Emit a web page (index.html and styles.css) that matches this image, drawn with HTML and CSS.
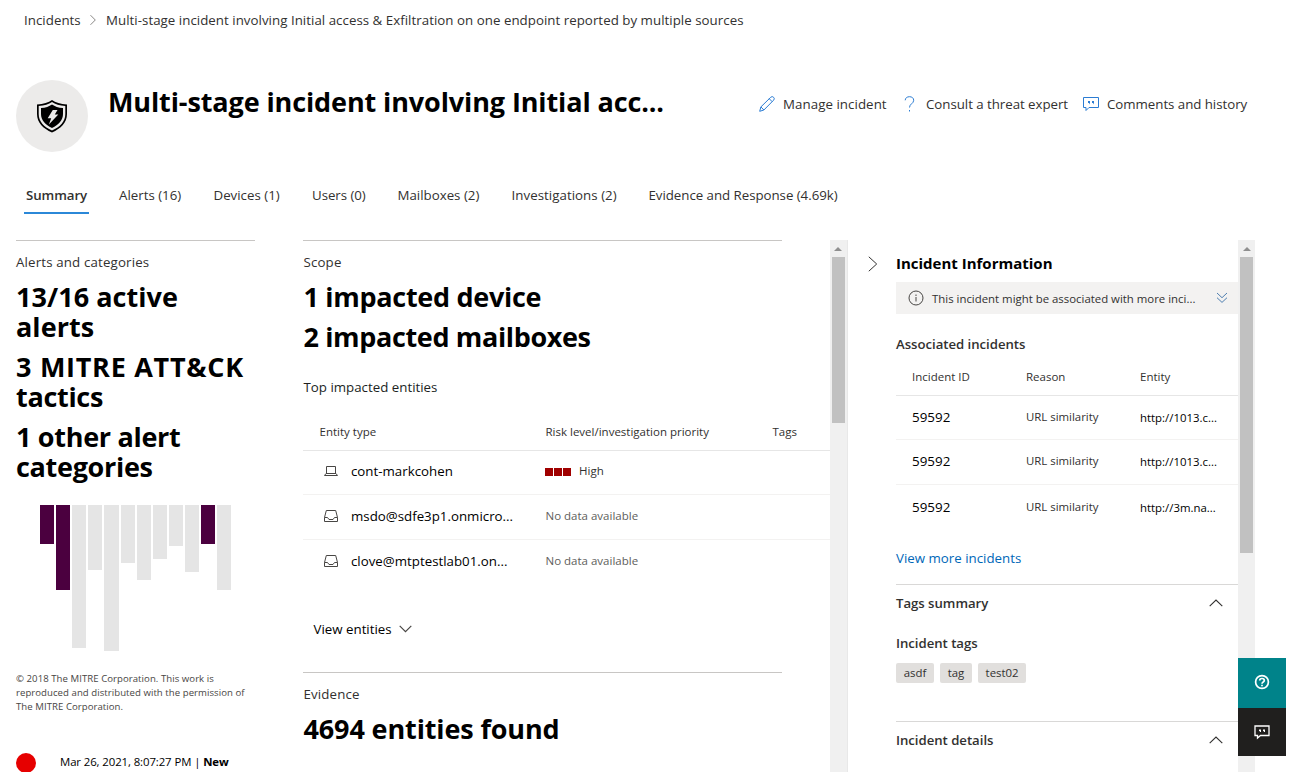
FILE: index.html
```html
<!DOCTYPE html>
<html lang="en">
<head>
<meta charset="utf-8">
<title>Incident summary</title>
<link rel="stylesheet" href="styles.css">
</head>
<body>
<div class="page">
  <nav class="crumbs">
    <span class="crumb-root">Incidents</span>
    <svg class="crumb-sep" width="8" height="12" viewBox="0 0 8 12"><path d="M1.500 1.200 6.300 6 1.500 10.800"/></svg>
    <span>Multi-stage incident involving Initial access &amp; Exfiltration on one endpoint reported by multiple sources</span>
  </nav>

  <header class="head">
    <div class="avatar">
      <svg width="32" height="34" viewBox="0 0 32 34">
        <path fill="#000" d="M16 1C12.500 3.600 7.500 5.200 1 5.600V15c0 8.500 6 14.500 15 18.500 9-4 15-10 15-18.500V5.600C24.500 5.200 19.500 3.600 16 1Z"/>
        <path fill="#ecebea" d="M16 3c-3.400 2.300-7.500 3.700-13.300 4.100V15c0 7.500 5.100 12.800 13.300 16.600C24.200 27.800 29.300 22.500 29.300 15V7.100C23.500 6.700 19.400 5.300 16 3Z"/>
        <path fill="#000" d="M16 5.400c-2.900 1.900-6.300 3.300-11 3.700V15c0 6.200 4.200 10.700 11 14C22.800 25.700 27 21.200 27 15V9.100C22.300 8.700 18.900 7.300 16 5.400Z"/>
        <path fill="#ecebea" d="M16.800 11h4.700l-2.700 4.600h3.500L12.900 25.500l2.300-6.300h-3.500Z"/>
      </svg>
    </div>
    <h1 class="title">Multi-stage incident involving Initial acc...</h1>
    <div class="actions">
      <span class="action">
        <svg width="16" height="16" viewBox="0 0 16 16"><path d="M.7 15.300 1.900 10.900 11.700 1.300a1.900 1.900 0 0 1 2.900 2.900L4.900 14ZM1.900 10.900 4.900 14M10.200 2.700l3 3"/></svg>
        <span class="lbl-manage">Manage incident</span>
      </span>
      <span class="action action-help">
        <svg width="11" height="16" viewBox="0 0 11 16"><path d="M1.200 4.300C1.300 2 3 .7 5.500.7s4.200 1.400 4.200 3.600c0 3.300-4.200 3.500-4.200 7.200M5.500 14v1.500"/></svg>
        <span class="lbl-help">Consult a threat expert</span>
      </span>
      <span class="action action-chat">
        <svg width="16" height="16" viewBox="0 0 16 16"><path d="M.5 1.500h15v10H6l-3 3v-3H.5Z"/><path class="dots" d="M5 5h2v2L6 8.500V7H5ZM9 5h2v2L10 8.500V7H9Z"/></svg>
        <span class="lbl-chat">Comments and history</span>
      </span>
    </div>
  </header>

  <nav class="tabs">
    <span class="tab active">Summary</span>
    <span class="tab t2">Alerts (16)</span>
    <span class="tab t3">Devices (1)</span>
    <span class="tab t4">Users (0)</span>
    <span class="tab t5">Mailboxes (2)</span>
    <span class="tab t6">Investigations (2)</span>
    <span class="tab t7">Evidence and Response (4.69k)</span>
  </nav>

  <main class="content">
    <section class="alerts">
      <h2 class="label">Alerts and categories</h2>
      <p class="big big-a">13/16 active<br>alerts</p>
      <p class="big"><span class="caps">3 MITRE ATT&amp;CK</span><br>tactics</p>
      <p class="big">1 other alert<br>categories</p>
      <div class="chart">
        <i class="bar on" style="height:39px"></i><i class="bar on" style="height:85px"></i><i class="bar" style="height:143px"></i><i class="bar" style="height:65px"></i><i class="bar wide" style="height:146px"></i><i class="bar" style="height:58px"></i><i class="bar" style="height:75px"></i><i class="bar" style="height:54px"></i><i class="bar" style="height:41px"></i><i class="bar" style="height:67px"></i><i class="bar on" style="height:39px"></i><i class="bar" style="height:85px"></i>
      </div>
      <p class="legal">© 2018 The MITRE Corporation. This work is<br>reproduced and distributed with the permission of<br>The MITRE Corporation.</p>
      <div class="event"><i class="dot"></i><span class="when">Mar 26, 2021, 8:07:27 PM | <b>New</b></span></div>
    </section>

    <section class="scope">
      <div class="block">
        <h2 class="label">Scope</h2>
        <p class="big">1 impacted device</p>
        <p class="big big-m">2 impacted mailboxes</p>
      </div>
      <h3 class="sub">Top impacted entities</h3>
      <div class="grid">
        <div class="gr gh"><span>Entity type</span><span>Risk level/investigation priority</span><span>Tags</span></div>
        <div class="gr">
          <span class="ent"><svg width="16" height="14" viewBox="0 0 16 14"><path d="M3.500 2.500h9v7h-9ZM1.500 11.500h13l-1.500-2H3Z"/></svg>cont-markcohen</span>
          <span class="risk"><i></i><i></i><i></i>High</span>
        </div>
        <div class="gr">
          <span class="ent"><svg width="16" height="14" viewBox="0 0 16 14"><path d="M3.300 1.500h9.400l1.800 7v4h-13v-4ZM1.500 8.500h3l1.500 2h4l1.500-2h3"/></svg>msdo@sdfe3p1.onmicro...</span>
          <span class="none">No data available</span>
        </div>
        <div class="gr last">
          <span class="ent"><svg width="16" height="14" viewBox="0 0 16 14"><path d="M3.300 1.500h9.400l1.800 7v4h-13v-4ZM1.500 8.500h3l1.500 2h4l1.500-2h3"/></svg>clove@mtptestlab01.on...</span>
          <span class="none">No data available</span>
        </div>
      </div>
      <div class="view">View entities <svg width="13" height="8" viewBox="0 0 13 8"><path d="M.7.8 6.500 6.600 12.300.8"/></svg></div>
      <div class="block">
        <h2 class="label">Evidence</h2>
        <p class="big big-e">4694 entities found</p>
      </div>
    </section>

    <div class="scroll mid"><i class="arrow"></i><i class="thumb"></i></div>

    <aside class="info">
      <svg class="collapse" width="10" height="16" viewBox="0 0 10 16"><path d="M.8.8 8.700 8 .8 15.200"/></svg>
      <div class="panel">
        <h2 class="info-title">Incident Information</h2>
        <div class="banner">
          <svg width="16" height="16" viewBox="0 0 16 16"><circle cx="8" cy="8" r="7"/><path d="M8 7v4.500M8 4.500V6"/></svg>
          <span>This incident might be associated with more inci...</span>
          <svg class="more" width="12" height="12" viewBox="0 0 12 12"><path d="M1 1l5 4.700L11 1M1 5.700l5 4.700 5-4.700"/></svg>
        </div>
        <h3 class="h assoc">Associated incidents</h3>
        <div class="ir ih"><span>Incident ID</span><span>Reason</span><span>Entity</span></div>
        <div class="ir"><span class="id">59592</span><span>URL similarity</span><span class="url">http://1013.c...</span></div>
        <div class="ir"><span class="id">59592</span><span>URL similarity</span><span class="url">http://1013.c...</span></div>
        <div class="ir last"><span class="id">59592</span><span>URL similarity</span><span class="url">http://3m.na...</span></div>
        <a class="link">View more incidents</a>
        <div class="sec">
          <h3 class="h">Tags summary</h3>
          <svg width="14" height="8" viewBox="0 0 14 8"><path d="M.7 7.200 7 1l6.300 6.200"/></svg>
        </div>
        <h3 class="h itags">Incident tags</h3>
        <div class="tags"><span>asdf</span><span>tag</span><span>test02</span></div>
        <div class="sec">
          <h3 class="h">Incident details</h3>
          <svg width="14" height="8" viewBox="0 0 14 8"><path d="M.7 7.200 7 1l6.300 6.200"/></svg>
        </div>
      </div>
      <div class="scroll side"><i class="arrow"></i><i class="thumb"></i></div>
    </aside>
  </main>

  <div class="float">
    <div class="fb help"><svg width="16" height="16" viewBox="0 0 16 16"><circle cx="8" cy="8" r="6.400"/><path d="M5.700 6.600C5.700 5.200 6.700 4.500 8 4.500s2.300.8 2.300 2C10.300 8 8 8 8 9.700M8 10.700v1.500"/></svg></div>
    <div class="fb chat"><svg width="16" height="16" viewBox="0 0 16 16"><path d="M1 2h14v9.500H6.500L3.500 14v-2.500H1Z"/><path class="dots" d="M5 5.500h2v2.500H5.800V7H5ZM9 5.500h2v2.500H9.800V7H9Z"/></svg></div>
  </div>
</div>
</body>
</html>
```
FILE: styles.css
```css
* { box-sizing: border-box; }
body {
  margin: 0;
  background: #fff;
  color: #323130;
  font: 13.3px/20px "Open Sans", "Noto Sans", sans-serif;
}
h1, h2, h3, p { margin: 0; font-weight: 400; }
i { display: block; }
svg { display: block; flex: none; fill: none; }
.page {
  position: relative;
  width: 1297px;
  height: 772px;
  overflow: hidden;
  white-space: nowrap;
}

/* breadcrumb */
.crumbs { display: flex; align-items: center; height: 40px; padding-left: 24px; letter-spacing: .03px; }
.crumb-root { width: 65px; }
.crumb-sep { width: 8px; margin-right: 9px; stroke: #8a8886; stroke-width: 1; }

/* header */
.head { display: flex; height: 112px; padding: 40px 0 0 16px; }
.avatar {
  display: flex; align-items: center; justify-content: center;
  width: 72px; height: 72px; border-radius: 50%; background: #ecebea;
}
.title { width: 650px; margin: 4px 0 0 20px; color: #000; font-size: 27px; font-weight: 700; line-height: 36px; letter-spacing: -.11px; }
.actions { display: flex; height: 20px; margin-top: 14px; }
.action { display: flex; align-items: center; }
.action svg { margin: 0 8px 0 1px; stroke: #2b7cd3; stroke-width: 1; }
.action .dots { fill: #2b7cd3; stroke: none; }
.lbl-manage { width: 121px; letter-spacing: .06px; }
.action-help svg { margin-right: 11px; margin-left: 0; }
.lbl-help { width: 157px; letter-spacing: -.04px; }
.action-chat svg { margin-left: 0; }
.lbl-chat { letter-spacing: -.04px; }

/* tabs */
.tabs { display: flex; height: 88px; padding: 24px 0 0 24px; }
.tab { height: 38px; line-height: 38px; }
.active {
  width: 65px; padding-left: 2px; margin-right: 30px;
  border-bottom: 2px solid #2b88d8; font-weight: 600; letter-spacing: -.08px;
}
.t2 { width: 94.500px; }
.t3 { width: 98.500px; }
.t4 { width: 85.500px; letter-spacing: -.05px; }
.t5 { width: 114px; }
.t6 { width: 137px; letter-spacing: .04px; }
.t7 { letter-spacing: -.04px; }

/* columns */
.content { display: flex; height: 532px; overflow: hidden; }
.alerts { width: 239px; margin: 0 48px 0 16px; padding-top: 11px; border-top: 1px solid #c8c6c4; flex: none; }
.label { font-size: 13.300px; font-weight: 500; letter-spacing: .15px; }
.big { margin-top: 10px; color: #000; font-size: 27px; font-weight: 700; line-height: 30px; letter-spacing: -.3px; }
.big-a { letter-spacing: .05px; }
.caps { letter-spacing: .72px; }
.big-m { letter-spacing: -.36px; }
.big-e { letter-spacing: -.13px; }

.chart { display: flex; align-items: flex-start; gap: 2px; height: 146px; margin: 23px 0 0 24px; }
.bar { width: 14px; background: #e5e5e5; }
.wide { width: 15px; }
.on { background: #4b003f; }
.legal { margin-top: 21px; color: #484644; font-size: 9.600px; font-weight: 500; line-height: 14px; letter-spacing: .05px; }
.event { display: flex; align-items: flex-start; margin-top: 38px; color: #000; }
.dot { width: 20px; height: 20px; margin: 1px 24px 0 0; border-radius: 50%; background: #e60000; }
.when { font-size: 11.400px; letter-spacing: -.1px; }
.when b { font-weight: 700; }

.scope { width: 527px; flex: none; }
.scope .label, .scope .big { padding-left: .500px; }
.block { width: 479px; padding-top: 11px; border-top: 1px solid #c8c6c4; }
.sub { margin-top: 25px; padding-left: .500px; color: #201f1e; font-size: 13.300px; }
.grid { margin-top: 16px; font-size: 11.500px; }
.gr {
  display: grid; grid-template-columns: 226px 227px 1fr; align-items: center;
  height: 45px; padding: 0 0 3px 16.500px; border-bottom: 1px solid #f3f2f1;
}
.gr.gh { height: 38px; padding-bottom: 0; border-color: #e6e6e6; }
.gr.gh + .gr { height: 44px; }
.gr.last { border: 0; }
.ent { display: flex; align-items: center; color: #000; font-size: 13.300px; }
.ent svg { margin: 0 12px 0 3.500px; stroke: #484644; }
.risk { display: flex; align-items: center; margin-left: -.500px; }
.risk i { width: 8px; height: 8px; margin: 1px 1px 0 0; background: #a00000; }
.risk i:nth-child(3) { margin-right: 8px; }
.none { color: #605e5c; }
.view { display: flex; align-items: center; margin: 34px 0 33px 10.500px; color: #000; }
.view svg { margin: -1px 0 0 7.500px; stroke: #484644; stroke-width: 1.200; }

/* scroll bars */
.scroll { flex: none; width: 17px; height: 532px; padding: 7px 2px 0; background: #f0f0f0; }
.mid { width: 18px; padding-right: 3px; border-right: 1px solid #e8e8e8; }
.arrow { width: 0; margin: 0 auto; border: 4px solid transparent; border-top: 0; border-bottom-color: #8f8f8f; }
.thumb { width: 13px; margin-top: 6px; background: #c1c1c1; }
.mid .thumb { height: 166px; }
.side .thumb { height: 296px; }

/* incident information */
.info { display: flex; width: 407px; flex: none; }
.collapse { margin: 16px 18px 0 20px; stroke: #323130; }
.panel { width: 342px; flex: none; padding-top: 13px; }
.info-title { color: #000; font-size: 15px; font-weight: 700; }
.banner { display: flex; align-items: center; height: 32px; margin-top: 9px; padding-left: 12px; background: #f3f2f1; font-size: 11.400px; }
.banner svg { margin-right: 8px; stroke: #484644; }
.banner span { width: 264px; padding-top: 1px; }
.banner .more { margin: 0 0 0 20px; stroke: #4f7fb0; }
.h { font-weight: 600; font-size: 13.200px; letter-spacing: -.03px; }
.assoc { margin-top: 20px; }
.ir {
  display: grid; grid-template-columns: 114px 114px 1fr; align-items: center;
  height: 45px; padding: 0 0 2px 16px; border-bottom: 1px solid #f3f2f1; font-size: 11.400px;
}
.ir.ih { height: 42px; padding: 4px 0 0 16px; font-size: 11.500px; border-color: #e6e6e6; }
.ir.ih + .ir { height: 44px; }
.ir.last { border: 0; }
.id { color: #000; font-size: 13.400px; }
.url { color: #000; padding-top: 2px; }
.link { display: block; margin: 18px 0 16px; color: #0067b8; }
.sec { display: flex; align-items: center; justify-content: space-between; height: 38px; padding: 0 15px 2px 0; border-top: 1px solid #d9d8d7; }
.sec svg { stroke: #323130; stroke-width: 1.100; }
.itags { margin-top: 11px; }
.tags { display: flex; gap: 6px; margin: 10px 0 38px; font-size: 11.400px; }
.tags span { height: 20px; padding: 0 7.700px; border-radius: 2px; background: #e1dfdd; }

/* floating buttons */
.float { position: absolute; left: 1238px; top: 658px; width: 48px; }
.fb { display: flex; align-items: center; justify-content: center; height: 48px; }
.help { height: 50px; padding-bottom: 2px; background: #00838a; }
.chat { background: #201f1e; }
.fb svg { stroke: #fff; stroke-width: 1.700; }
.chat svg { stroke-width: 1.300; }
.fb .dots { fill: #fff; stroke: none; }
```
